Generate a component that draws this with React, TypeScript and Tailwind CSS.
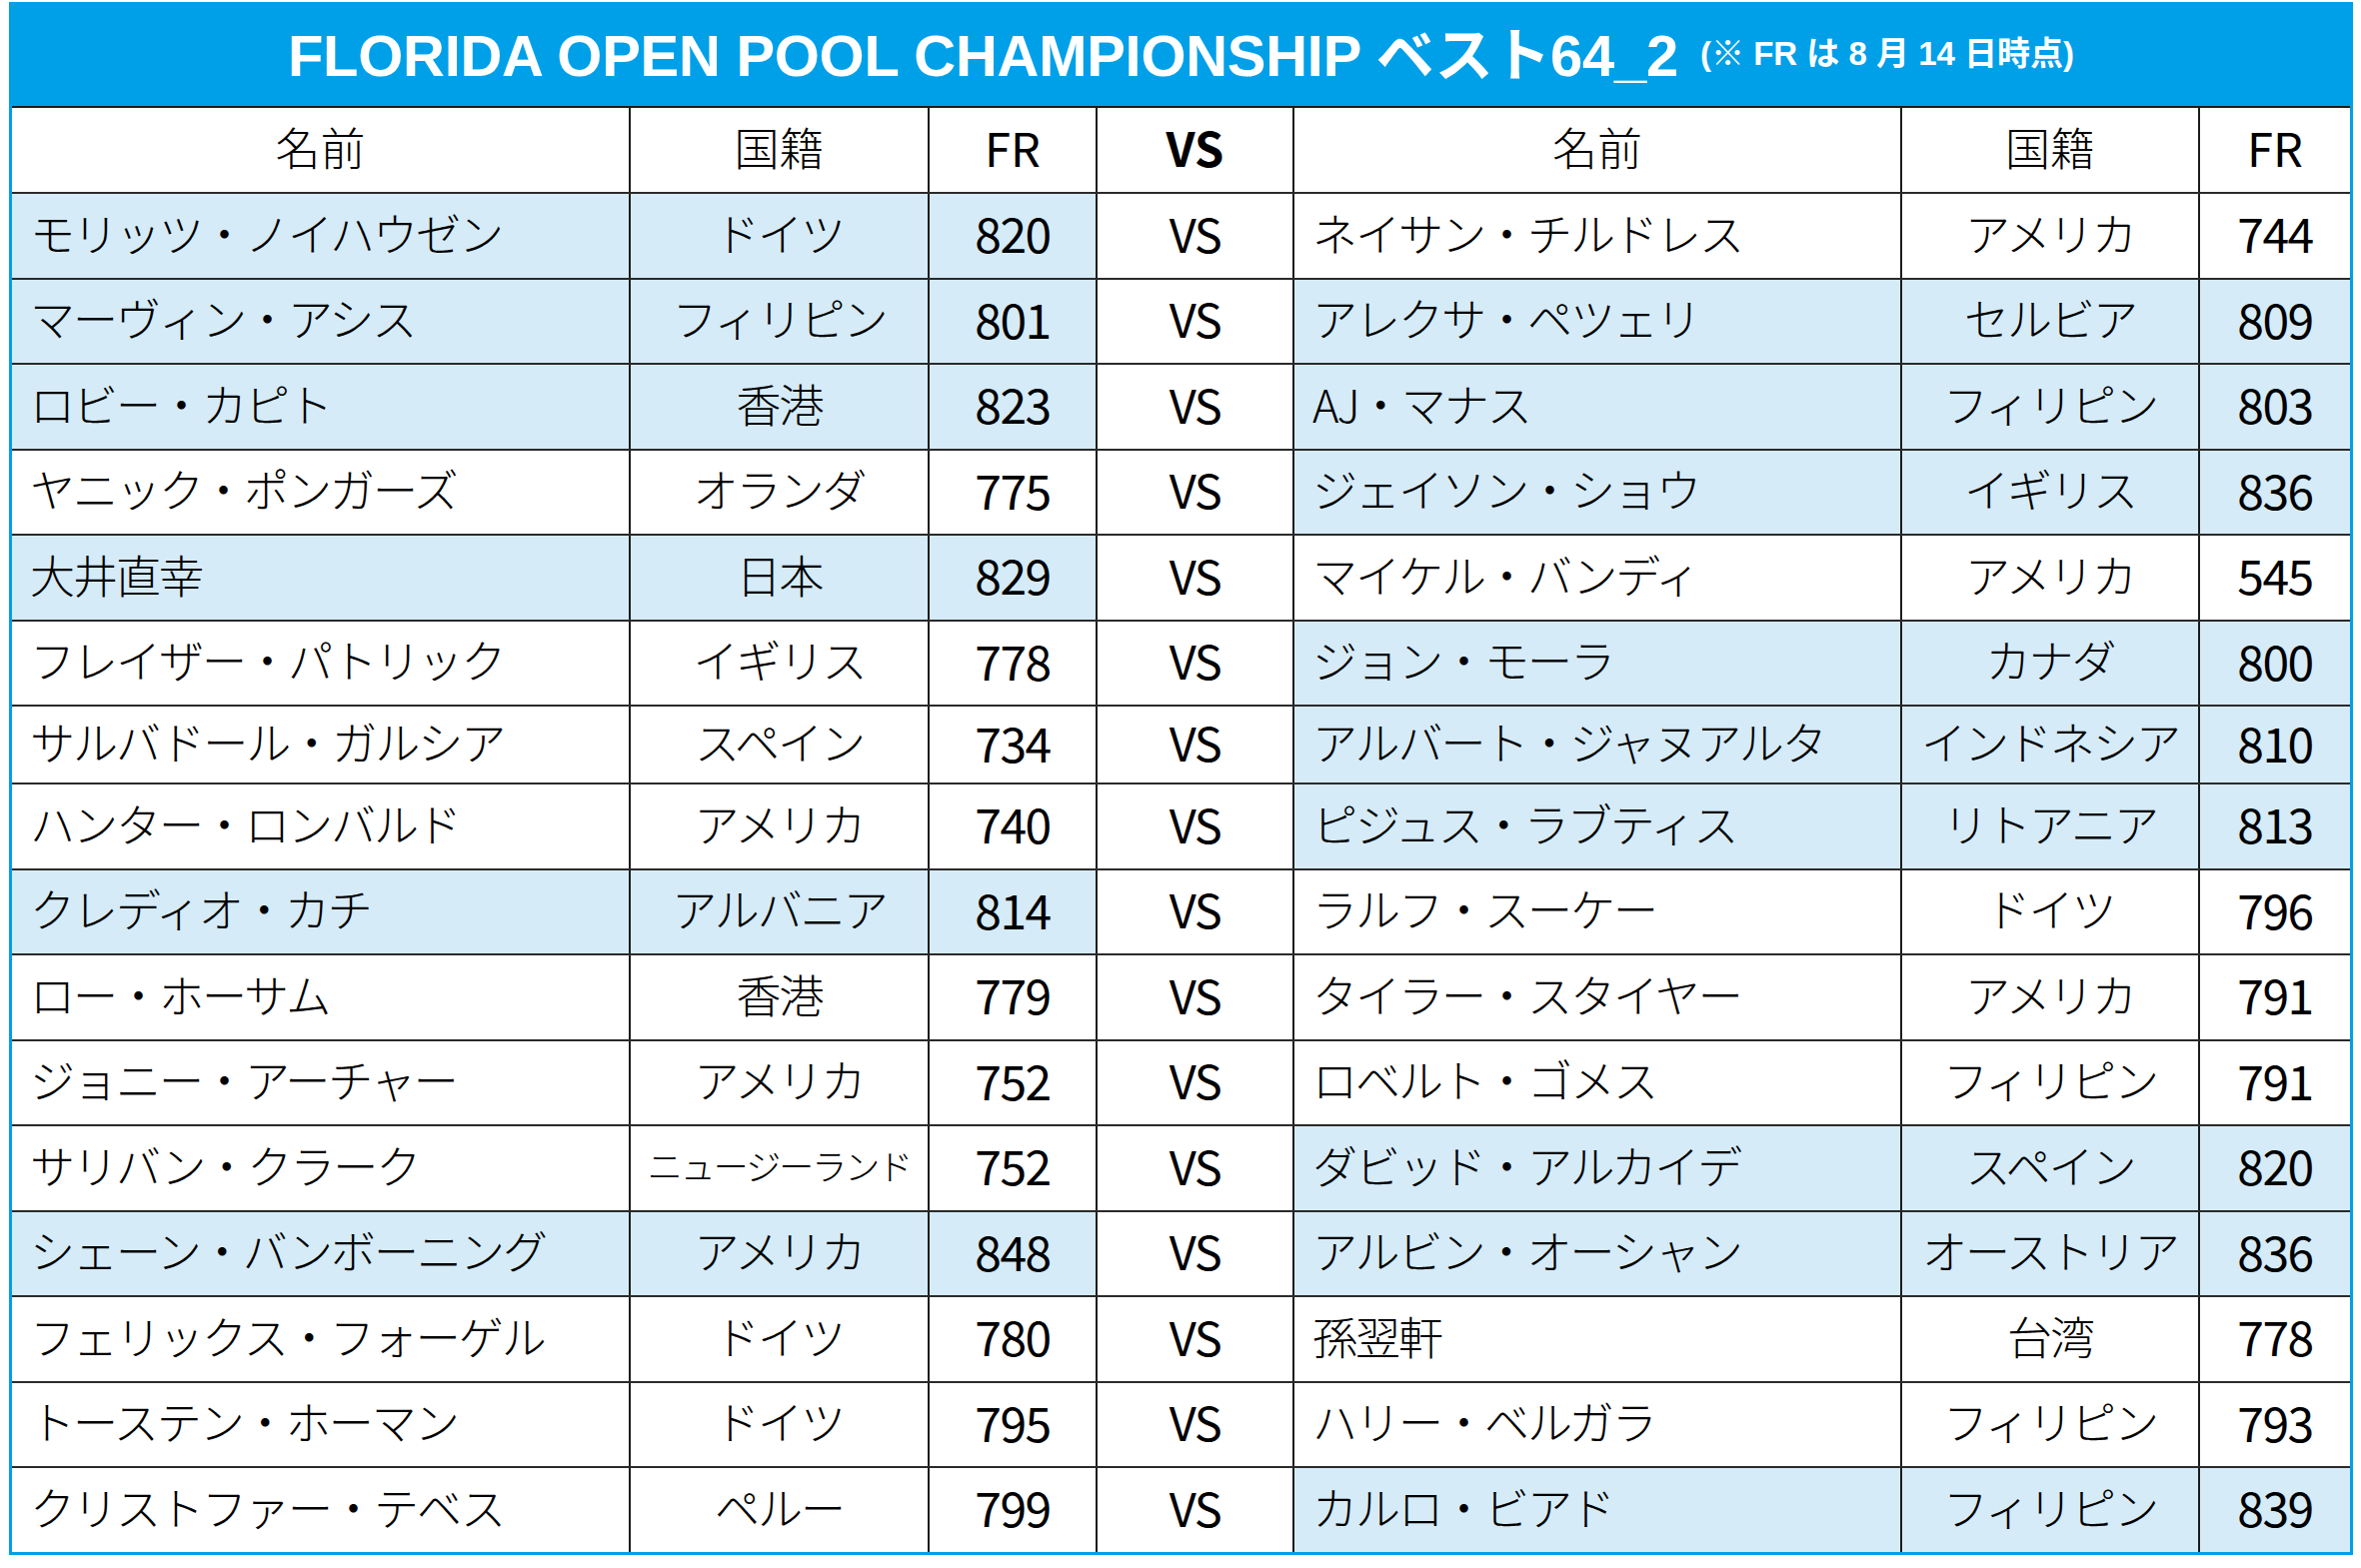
const rows: [string, string, string, boolean, string, string, string, boolean, boolean?][] = [
  ["モリッツ・ノイハウゼン", "ドイツ", "820", true, "ネイサン・チルドレス", "アメリカ", "744", false],
  ["マーヴィン・アシス", "フィリピン", "801", true, "アレクサ・ペツェリ", "セルビア", "809", true],
  ["ロビー・カピト", "香港", "823", true, "AJ・マナス", "フィリピン", "803", true],
  ["ヤニック・ポンガーズ", "オランダ", "775", false, "ジェイソン・ショウ", "イギリス", "836", true],
  ["大井直幸", "日本", "829", true, "マイケル・バンディ", "アメリカ", "545", false],
  ["フレイザー・パトリック", "イギリス", "778", false, "ジョン・モーラ", "カナダ", "800", true],
  ["サルバドール・ガルシア", "スペイン", "734", false, "アルバート・ジャヌアルタ", "インドネシア", "810", true, true],
  ["ハンター・ロンバルド", "アメリカ", "740", false, "ピジュス・ラブティス", "リトアニア", "813", true],
  ["クレディオ・カチ", "アルバニア", "814", true, "ラルフ・スーケー", "ドイツ", "796", false],
  ["ロー・ホーサム", "香港", "779", false, "タイラー・スタイヤー", "アメリカ", "791", false],
  ["ジョニー・アーチャー", "アメリカ", "752", false, "ロベルト・ゴメス", "フィリピン", "791", false],
  ["サリバン・クラーク", "ニュージーランド", "752", false, "ダビッド・アルカイデ", "スペイン", "820", true],
  ["シェーン・バンボーニング", "アメリカ", "848", true, "アルビン・オーシャン", "オーストリア", "836", true],
  ["フェリックス・フォーゲル", "ドイツ", "780", false, "孫翌軒", "台湾", "778", false],
  ["トーステン・ホーマン", "ドイツ", "795", false, "ハリー・ベルガラ", "フィリピン", "793", false],
  ["クリストファー・テベス", "ペルー", "799", false, "カルロ・ビアド", "フィリピン", "839", true],
];

const cols = "grid grid-cols-[619px_299px_168px_197px_608px_298px_150px]";
const cell = "flex items-center pb-[7px] border-r-2 border-[#1c1c1c]";
const hi = "bg-[#d5ebf8]";

const App = () => {
  return (
    <div className="w-[2362px] h-[1569px] bg-white pt-[2px] pl-[9px] text-black" style={{ fontFamily: '"Noto Sans CJK JP", "Noto Sans", sans-serif' }}>
      <div className="w-[2345px] border-[3px] border-[#00a0e9]">
        <div className="h-[101px] bg-[#00a0e9] flex items-center justify-center text-white gap-[22px]">
          <span className="text-[58px] font-bold tracking-[-0.005em] leading-none" style={{ fontFamily: '"Liberation Sans", "Noto Sans CJK JP", sans-serif' }}>
            FLORIDA OPEN POOL CHAMPIONSHIP ベスト64_2
          </span>
          <span className="text-[33px] font-bold leading-none mb-[4px]" style={{ fontFamily: '"Liberation Sans", "Noto Sans CJK JP", sans-serif' }}>
            (※ FR は 8 月 14 日時点)
          </span>
        </div>

        <div className={`${cols} h-[86px] border-t-2 border-[#1c1c1c] text-[45px] font-light leading-none`}>
          <div className={`${cell} justify-center`}>名前</div>
          <div className={`${cell} justify-center`}>国籍</div>
          <div className={`${cell} justify-center text-[47px] font-normal`}>FR</div>
          <div className={`${cell} justify-center text-[47px] font-bold`}>VS</div>
          <div className={`${cell} justify-center`}>名前</div>
          <div className={`${cell} justify-center`}>国籍</div>
          <div className="flex items-center justify-center pb-[7px] text-[47px] font-normal">FR</div>
        </div>

        {rows.map(([n1, c1, f1, h1, n2, c2, f2, h2, short], i) => (
          <div key={i} className={`${cols} ${short ? "h-[78px]" : "h-[85.5px]"} border-t-2 border-[#2a2a2a] text-[45px] font-light leading-none`}>
            <div className={`${cell} pl-[18px] tracking-[-2px] ${h1 ? hi : ""}`}>{n1}</div>
            <div className={`${cell} justify-center tracking-[-2px] ${h1 ? hi : ""} ${c1.length > 6 ? "text-[35px]" : ""}`}>{c1}</div>
            <div className={`${cell} justify-center text-[48px] font-normal tracking-[-0.03em] ${h1 ? hi : ""}`}>{f1}</div>
            <div className={`${cell} justify-center text-[47px] font-normal tracking-[-0.03em]`}>VS</div>
            <div className={`${cell} pl-[18px] tracking-[-2px] ${h2 ? hi : ""}`}>{n2}</div>
            <div className={`${cell} justify-center tracking-[-2px] ${h2 ? hi : ""}`}>{c2}</div>
            <div className={`flex items-center justify-center pb-[7px] text-[48px] font-normal tracking-[-0.03em] ${h2 ? hi : ""}`}>{f2}</div>
          </div>
        ))}
      </div>
    </div>
  );
};

export default App;
